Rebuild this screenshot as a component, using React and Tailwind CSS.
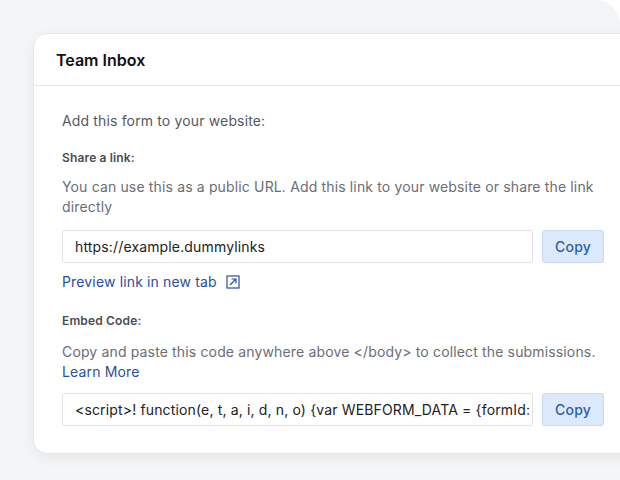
export default function App() {
  return (
    <div className="w-[620px] h-[480px] overflow-hidden bg-white" style={{ fontFamily: "Inter, 'Noto Sans', sans-serif" }}>
      <div className="h-full rounded-tr-[24px] bg-[#f4f5f7] pt-[33px] pl-[33px]">
        <div className="w-[620px] rounded-l-[14px] bg-white border border-[#e4e6ea] shadow-[0_4px_14px_rgba(0,0,0,0.06)]">
          <div className="h-[52px] flex items-center px-[22px] border-b border-[#e4e6ea]">
            <h1 className="text-[16px] font-semibold text-[#111]">Team Inbox</h1>
          </div>
          <div className="pl-[28px] pr-[10px] pt-[25px] pb-[27px] w-[620px] tracking-[0.15px]">
            <p className="text-[14px] text-[#55585e] leading-[20px]">Add this form to your website:</p>
            <p className="mt-[19px] text-[12px] font-semibold text-[#4a4d52] leading-[16px]">Share a link:</p>
            <p className="mt-[11px] text-[14px] text-[#6b6e74] leading-[20px] w-[540px]">You can use this as a public URL. Add this link to your website or share the link directly</p>
            <div className="mt-[13px] flex gap-[9px]">
              <div className="shrink-0 w-[471px] h-[33px] border border-[#dfe1e5] rounded-[3px] flex items-center px-[12px] text-[14px] text-[#222]">https://example.dummylinks</div>
              <button className="shrink-0 w-[62px] h-[33px] rounded-[3px] bg-[#dbe9fb] border border-[#c4d9f3] text-[14px] font-medium text-[#2b5fa8]">Copy</button>
            </div>
            <a className="mt-[9px] flex items-center gap-[9px] text-[14px] text-[#2c4f9a] leading-[20px]">
              Preview link in new tab
              <svg width="14" height="14" viewBox="0 0 14 14" fill="none" stroke="#2c4f9a" strokeWidth="1.2">
                <rect x="1" y="1" width="12" height="12" />
                <path d="M4 10L10 4M5.5 4H10V8.5" />
              </svg>
            </a>
            <p className="mt-[21px] text-[12px] font-semibold text-[#4a4d52] leading-[16px]">Embed Code:</p>
            <p className="mt-[13px] text-[14px] text-[#6b6e74] leading-[20px]">Copy and paste this code anywhere above &lt;/body&gt; to collect the submissions.</p>
            <a className="block text-[14px] text-[#2c4f9a] leading-[20px]">Learn More</a>
            <div className="mt-[11px] flex gap-[9px]">
              <div className="shrink-0 w-[471px] h-[33px] border border-[#dfe1e5] rounded-[3px] flex items-center px-[12px] text-[14px] text-[#222] whitespace-nowrap overflow-hidden">&lt;script&gt;! function(e, t, a, i, d, n, o) {"{"}var WEBFORM_DATA = {"{"}formId:</div>
              <button className="shrink-0 w-[62px] h-[33px] rounded-[3px] bg-[#dbe9fb] border border-[#c4d9f3] text-[14px] font-medium text-[#2b5fa8]">Copy</button>
            </div>
          </div>
        </div>
      </div>
    </div>
  );
}
